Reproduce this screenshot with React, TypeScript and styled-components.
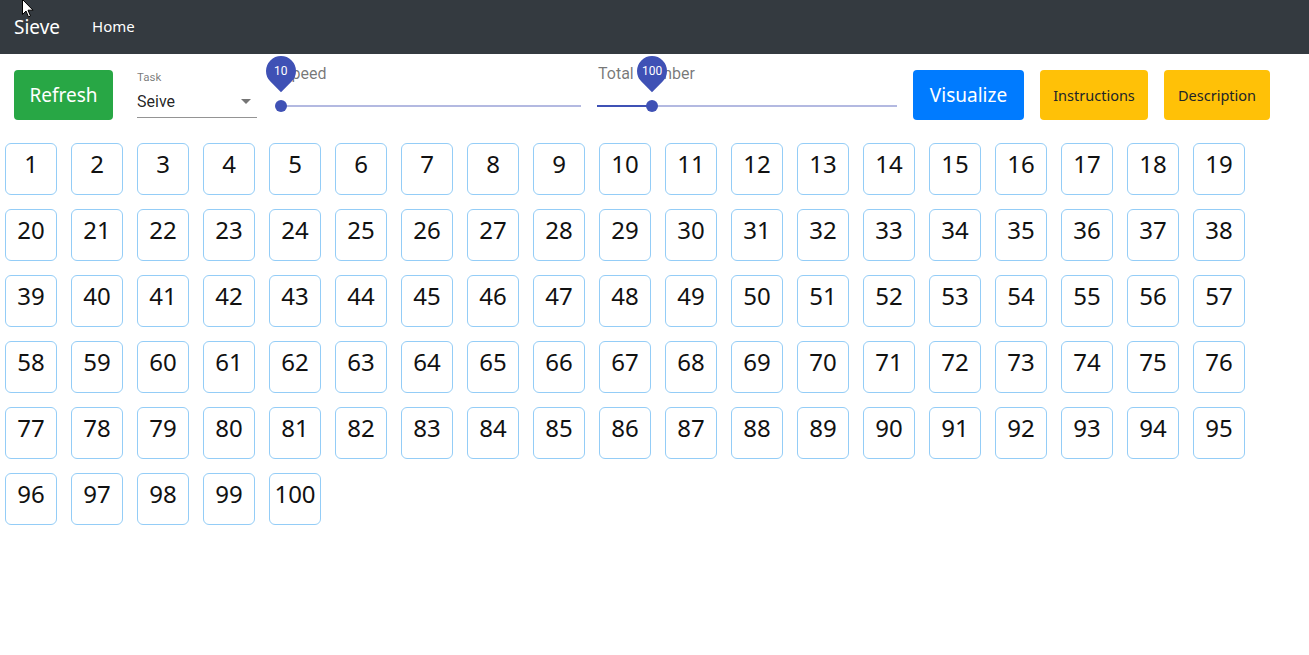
import React from 'react'
import styled, { createGlobalStyle } from 'styled-components'

const GlobalStyle = createGlobalStyle`
  body {
    margin: 0;
    background: #fff;
    font-family: 'Segoe UI', 'Noto Sans', 'Open Sans', sans-serif;
  }
`

const Page = styled.div`
  position: relative;
  width: 1309px;
  min-height: 655px;
`

const NavBar = styled.nav`
  height: 54px;
  background: #343a40;
  display: flex;
  align-items: center;
  padding: 0 14px;
  box-sizing: border-box;
`
const Brand = styled.div`
  color: #fff;
  font-size: 19px;
  margin-right: 32px;
  padding-bottom: 1px;
`
const NavLink = styled.div`
  color: #fff;
  font-size: 15px;
  padding-bottom: 2px;
`

const Toolbar = styled.div`
  display: flex;
  align-items: flex-start;
  padding: 16px 0 0 14px;
  height: 89px;
  box-sizing: border-box;
`

const Button = styled.button<{ $variant: 'green' | 'blue' | 'yellow'; $width: number }>`
  height: 50px;
  width: ${(p) => p.$width}px;
  border: none;
  border-radius: 4px;
  padding: 0;
  margin-right: ${(p) => (p.$variant === 'green' ? 24 : 16)}px;
  font-family: 'Segoe UI', 'Noto Sans', 'Open Sans', sans-serif;
  font-size: ${(p) => (p.$variant === 'yellow' ? 14.5 : 19)}px;
  background: ${(p) =>
    p.$variant === 'green' ? '#28a745' : p.$variant === 'blue' ? '#007bff' : '#ffc107'};
  color: ${(p) => (p.$variant === 'yellow' ? '#212529' : '#fff')};
  cursor: pointer;
`

const SelectBox = styled.div`
  width: 120px;
  margin-right: 24px;
  font-family: Roboto, sans-serif;
  display: flex;
  flex-direction: column;
`
const SelectLabel = styled.div`
  font-size: 11.5px;
  color: rgba(0, 0, 0, 0.54);
  line-height: 14px;
`
const SelectValue = styled.div`
  display: flex;
  align-items: center;
  justify-content: space-between;
  font-size: 16px;
  color: rgba(0, 0, 0, 0.87);
  height: 32px;
  padding-top: 1px;
  border-bottom: 1px solid rgba(0, 0, 0, 0.42);
  padding-right: 6px;
`

const SliderBox = styled.div`
  width: 300px;
  margin-right: 16px;
  font-family: Roboto, sans-serif;
`
const SliderLabel = styled.div`
  font-size: 16px;
  color: rgba(0, 0, 0, 0.54);
  line-height: 18px;
  margin: -5px 0 0 1px;
`
const Track = styled.div`
  position: relative;
  height: 2px;
  margin-top: 22px;
  background: #b3b9e1;
`
const Fill = styled.div`
  position: absolute;
  left: 0;
  top: 0;
  height: 2px;
  background: #3f51b5;
`
const Thumb = styled.div`
  position: absolute;
  top: -5px;
  width: 12px;
  height: 12px;
  margin-left: -6px;
  border-radius: 50%;
  background: #3f51b5;
`
const Bubble = styled.div`
  position: absolute;
  left: -9px;
  top: -44px;
  width: 30px;
  height: 30px;
  border-radius: 50% 50% 50% 0;
  background: #3f51b5;
  transform: rotate(-45deg);
  display: flex;
  align-items: center;
  justify-content: center;
`
const BubbleText = styled.span`
  transform: rotate(45deg);
  color: #fff;
  font-size: 12px;
`

const Grid = styled.div`
  display: flex;
  flex-wrap: wrap;
  gap: 14px;
  padding-left: 5px;
`
const Cell = styled.div`
  width: 52px;
  height: 52px;
  box-sizing: border-box;
  border: 1px solid #94cdf7;
  border-radius: 6px;
  font-size: 24px;
  color: #111;
  text-align: center;
  line-height: 38px;
  padding-top: 1px;
`

const Cursor = styled.svg`
  position: absolute;
  left: 22px;
  top: -1px;
`

const Slider = ({ label, value, pos }: { label: string; value: number; pos: number }) => (
  <SliderBox>
    <SliderLabel>{label}</SliderLabel>
    <Track>
      <Fill style={{ width: `${pos}%` }} />
      <Thumb style={{ left: `${pos}%` }}>
        <Bubble>
          <BubbleText>{value}</BubbleText>
        </Bubble>
      </Thumb>
    </Track>
  </SliderBox>
)

const App = () => {
  const nums = Array.from({ length: 100 }, (_, i) => i + 1)
  return (
    <Page>
      <GlobalStyle />
      <NavBar>
        <Brand>Sieve</Brand>
        <NavLink>Home</NavLink>
      </NavBar>
      <Toolbar>
        <Button $variant="green" $width={99}>
          Refresh
        </Button>
        <SelectBox>
          <SelectLabel>Task</SelectLabel>
          <SelectValue>
            Seive
            <svg width="10" height="5" viewBox="0 0 10 5">
              <path d="M0 0 L10 0 L5 5 Z" fill="rgba(0,0,0,0.54)" />
            </svg>
          </SelectValue>
        </SelectBox>
        <Slider label="Speed" value={10} pos={0} />
        <Slider label="Total Number" value={100} pos={18.3} />
        <Button $variant="blue" $width={111}>
          Visualize
        </Button>
        <Button $variant="yellow" $width={108}>
          Instructions
        </Button>
        <Button $variant="yellow" $width={106}>
          Description
        </Button>
      </Toolbar>
      <Grid>
        {nums.map((n) => (
          <Cell key={n}>{n}</Cell>
        ))}
      </Grid>
      <Cursor width="12" height="19" viewBox="0 0 12 19">
        <path d="M0.5 0.5 L0.5 15.5 L4 12 L6.5 18 L8.5 17 L6 11.2 L11 11.2 Z" fill="#fff" stroke="#000" strokeWidth="1" />
      </Cursor>
    </Page>
  )
}

export default App
